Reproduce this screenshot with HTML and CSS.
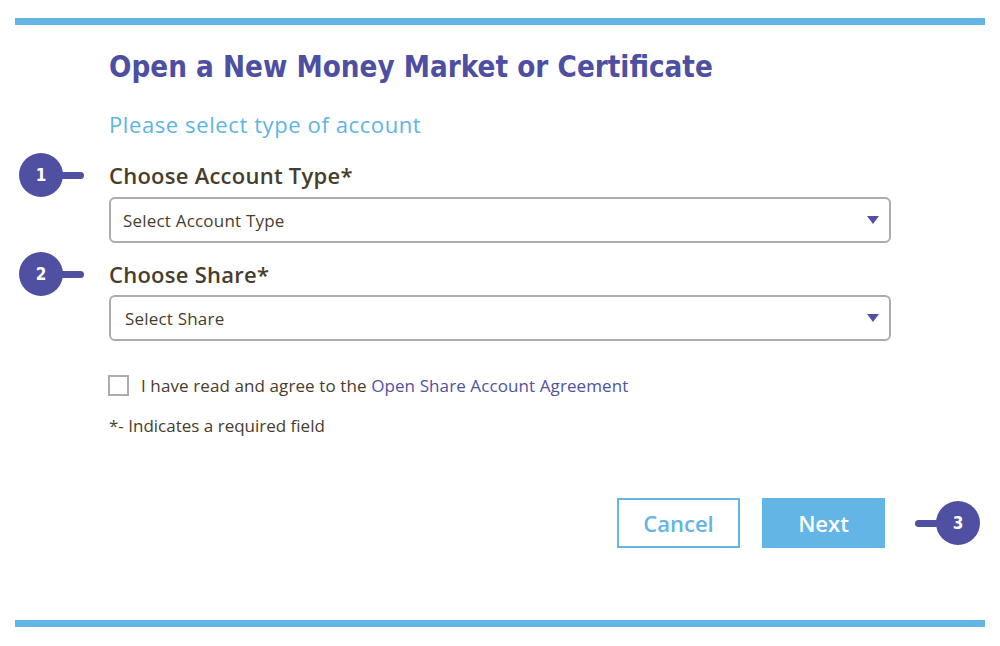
FILE: index.html
```html
<!DOCTYPE html>
<html lang="en">
<head>
  <meta charset="UTF-8">
  <meta name="viewport" content="width=device-width, initial-scale=1.0">
  <title>Open a New Money Market or Certificate</title>
  <link rel="stylesheet" href="styles.css">
</head>
<body>
  <div class="page">
    <div class="rule"></div>

    <form class="form">
      <h1 class="title">Open a New Money Market or Certificate</h1>
      <p class="lead">Please select type of account</p>

      <div class="field-row">
        <div class="step">
          <span class="step-num">1</span>
          <span class="step-line"></span>
        </div>
        <label class="field-label" for="accountType">Choose Account Type*</label>
      </div>
      <div class="select">
        <span id="accountType">Select Account Type</span>
        <span class="caret"></span>
      </div>

      <div class="field-row field-row-second">
        <div class="step">
          <span class="step-num">2</span>
          <span class="step-line"></span>
        </div>
        <label class="field-label" for="share">Choose Share*</label>
      </div>
      <div class="select select-share">
        <span id="share">Select Share</span>
        <span class="caret"></span>
      </div>

      <label class="agree">
        <span class="checkbox"></span>
        I have read and agree to the&nbsp;<a href="#" class="link">Open Share Account Agreement</a>
      </label>

      <p class="note">*- Indicates a required field</p>

      <div class="actions">
        <button type="button" class="btn btn-outline">Cancel</button>
        <button type="button" class="btn btn-fill">Next</button>
        <div class="step step-right">
          <span class="step-line"></span>
          <span class="step-num">3</span>
        </div>
      </div>
    </form>

    <div class="rule rule-bottom"></div>
  </div>
</body>
</html>
```

FILE: styles.css
```css
body {
  margin: 0;
  background: #fff;
  font-family: 'Open Sans', 'Lato', sans-serif;
  color: #473d2e;
}

.page {
  padding: 18px 15px 0 15px;
}

.rule {
  height: 7px;
  background: #62b5e5;
}

.rule-bottom {
  margin-top: 72px;
}

/* content column starts at x=109, the gutter holds the step markers */
.form {
  display: grid;
  grid-template-columns: 94px 782px 1fr;
}

.form > * {
  grid-column: 2;
}

.title {
  margin: 24px 0 0 0;
  font-family: 'DejaVu Sans Condensed', 'DejaVu Sans', sans-serif;
  font-stretch: condensed;
  font-size: 29.3px;
  line-height: 36px;
  font-weight: bold;
  color: #4d4fa2;
}

.lead {
  margin: 26px 0 0 0;
  font-size: 22px;
  line-height: 26px;
  letter-spacing: 0.6px;
  color: #5eb4e4;
}

.field-row {
  grid-column: 1 / 3;
  display: flex;
  align-items: center;
  margin-top: 26px;
  height: 24px;
}

.field-row-second {
  margin-top: 19px;
}

.step {
  width: 94px;
  height: 24px;
  flex-shrink: 0;
  display: flex;
  align-items: center;
  padding-left: 4px;
  box-sizing: border-box;
}

.step-num {
  width: 44px;
  height: 44px;
  flex-shrink: 0;
  border-radius: 50%;
  background: #4f50a1;
  color: #fff;
  display: flex;
  align-items: center;
  justify-content: center;
  font-family: 'DejaVu Sans Condensed', 'DejaVu Sans', sans-serif;
  font-stretch: condensed;
  font-weight: bold;
  font-size: 17px;
}

.step-line {
  width: 24px;
  height: 7px;
  margin-left: -3px;
  border-radius: 4px;
  background: #4f50a1;
}

.field-label {
  font-size: 22px;
  line-height: 24px;
  letter-spacing: 0.25px;
  font-weight: 600;
}

.select {
  margin-top: 10px;
  height: 42px;
  border: 2px solid #acacac;
  border-radius: 6px;
  display: flex;
  align-items: center;
  justify-content: space-between;
  padding: 0 10px 0 12px;
  font-size: 17px;
  letter-spacing: 0.2px;
}

.select-share {
  margin-top: 9px;
  padding-left: 14px;
}

.caret {
  width: 0;
  height: 0;
  border-left: 6px solid transparent;
  border-right: 6px solid transparent;
  border-top: 8px solid #4f50a1;
}

.agree {
  margin-top: 34px;
  display: flex;
  align-items: center;
  font-size: 17px;
  line-height: 20px;
  letter-spacing: 0.1px;
}

.checkbox {
  width: 17px;
  height: 17px;
  border: 2px solid #acacac;
  margin: 0 12px 0 -1px;
}

.link {
  color: #5152a2;
  text-decoration: none;
}

.note {
  margin: 20px 0 0 0;
  font-size: 17px;
  line-height: 20px;
}

.actions {
  margin-top: 62px;
  display: flex;
  justify-content: flex-end;
  align-items: center;
  gap: 22px;
  padding-right: 6px;
  position: relative;
}

.btn {
  width: 123px;
  height: 50px;
  font-family: 'Open Sans', 'Lato', sans-serif;
  font-size: 22px;
  font-weight: 600;
  cursor: pointer;
}

.btn-outline {
  background: #fff;
  color: #62b5e5;
  border: 2px solid #62b5e5;
}

.btn-fill {
  background: #62b5e5;
  color: #fff;
  border: none;
}

/* marker 3 hangs outside the content column, right of the buttons */
.step-right {
  position: absolute;
  left: 806px;
  top: 13px;
  padding-left: 0;
  width: auto;
}

.step-right .step-line {
  margin-left: 0;
  margin-right: -3px;
}
```
